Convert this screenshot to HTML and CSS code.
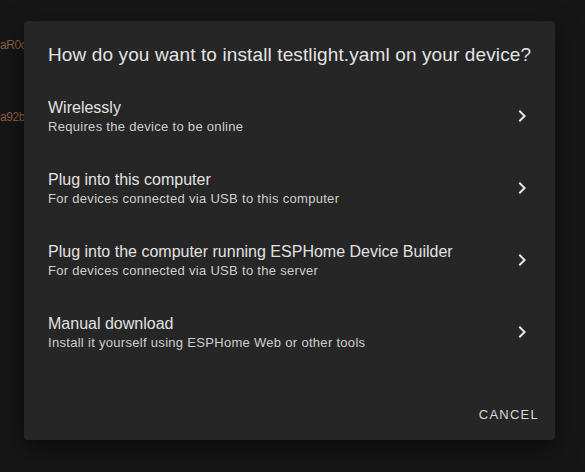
FILE: index.html
```html
<!DOCTYPE html>
<html>
<head>
<meta charset="utf-8">
<link rel="stylesheet" href="styles.css">
</head>
<body>
<div class="backdrop">
  <div class="bg-line">aR0c</div>
  <div class="bg-line">a92b</div>
</div>
<div class="dialog" role="dialog">
  <h2 class="title">How do you want to install testlight.yaml on your device?</h2>
  <ul class="list">
    <li class="item">
      <div class="texts">
        <span class="primary">Wirelessly</span>
        <span class="secondary">Requires the device to be online</span>
      </div>
      <svg class="chev" viewBox="0 0 24 24" width="24" height="24"><path d="M8.59 16.59L13.17 12 8.59 7.41 10 6l6 6-6 6-1.41-1.41z"/></svg>
    </li>
    <li class="item">
      <div class="texts">
        <span class="primary">Plug into this computer</span>
        <span class="secondary">For devices connected via USB to this computer</span>
      </div>
      <svg class="chev" viewBox="0 0 24 24" width="24" height="24"><path d="M8.59 16.59L13.17 12 8.59 7.41 10 6l6 6-6 6-1.41-1.41z"/></svg>
    </li>
    <li class="item">
      <div class="texts">
        <span class="primary">Plug into the computer running ESPHome Device Builder</span>
        <span class="secondary">For devices connected via USB to the server</span>
      </div>
      <svg class="chev" viewBox="0 0 24 24" width="24" height="24"><path d="M8.59 16.59L13.17 12 8.59 7.41 10 6l6 6-6 6-1.41-1.41z"/></svg>
    </li>
    <li class="item">
      <div class="texts">
        <span class="primary">Manual download</span>
        <span class="secondary">Install it yourself using ESPHome Web or other tools</span>
      </div>
      <svg class="chev" viewBox="0 0 24 24" width="24" height="24"><path d="M8.59 16.59L13.17 12 8.59 7.41 10 6l6 6-6 6-1.41-1.41z"/></svg>
    </li>
  </ul>
  <div class="actions">
    <button class="btn">Cancel</button>
  </div>
</div>
</body>
</html>
```
FILE: styles.css
```css
html, body {
  margin: 0;
  padding: 0;
  background: #161616;
  height: 100%;
  overflow: hidden;
  font-family: "Liberation Sans", Arial, sans-serif;
}
.backdrop {
  padding-top: 38px;
  display: flex;
  flex-direction: column;
  gap: 58px;
}
.bg-line {
  color: #8f5f42;
  font-size: 12px;
  letter-spacing: -0.4px;
  line-height: 14px;
  white-space: nowrap;
}
.dialog {
  position: absolute;
  left: 24px;
  top: 21px;
  width: 531px;
  height: 419px;
  box-sizing: border-box;
  background: #262626;
  border-radius: 4px;
  box-shadow: 0 8px 24px rgba(0,0,0,0.5);
  display: flex;
  flex-direction: column;
}
.title {
  margin: 0;
  padding: 23px 24px 0 24px;
  height: 59px;
  box-sizing: border-box;
  font-size: 19px;
  letter-spacing: 0.12px;
  font-weight: normal;
  line-height: 22px;
  color: #e3e3e3;
  white-space: nowrap;
}
.list {
  list-style: none;
  margin: 0;
  padding: 0;
}
.item {
  height: 72px;
  display: flex;
  align-items: center;
  padding: 0 21px 0 24px;
}
.texts {
  flex: 1;
  display: flex;
  flex-direction: column;
  gap: 2px;
}
.primary {
  font-size: 16px;
  line-height: 18px;
  color: #e1e1e1;
}
.secondary {
  font-size: 13px;
  letter-spacing: 0.3px;
  line-height: 15px;
  color: #cfcfcf;
}
.chev {
  fill: #e6e6e6;
  flex: none;
}
.actions {
  margin-top: auto;
  display: flex;
  justify-content: flex-end;
  padding: 8px;
}
.btn {
  background: none;
  border: none;
  height: 36px;
  padding: 0 8px;
  font-family: "Liberation Sans", Arial, sans-serif;
  font-size: 13px;
  letter-spacing: 1.25px;
  text-transform: uppercase;
  color: #d8d8d8;
}
```
